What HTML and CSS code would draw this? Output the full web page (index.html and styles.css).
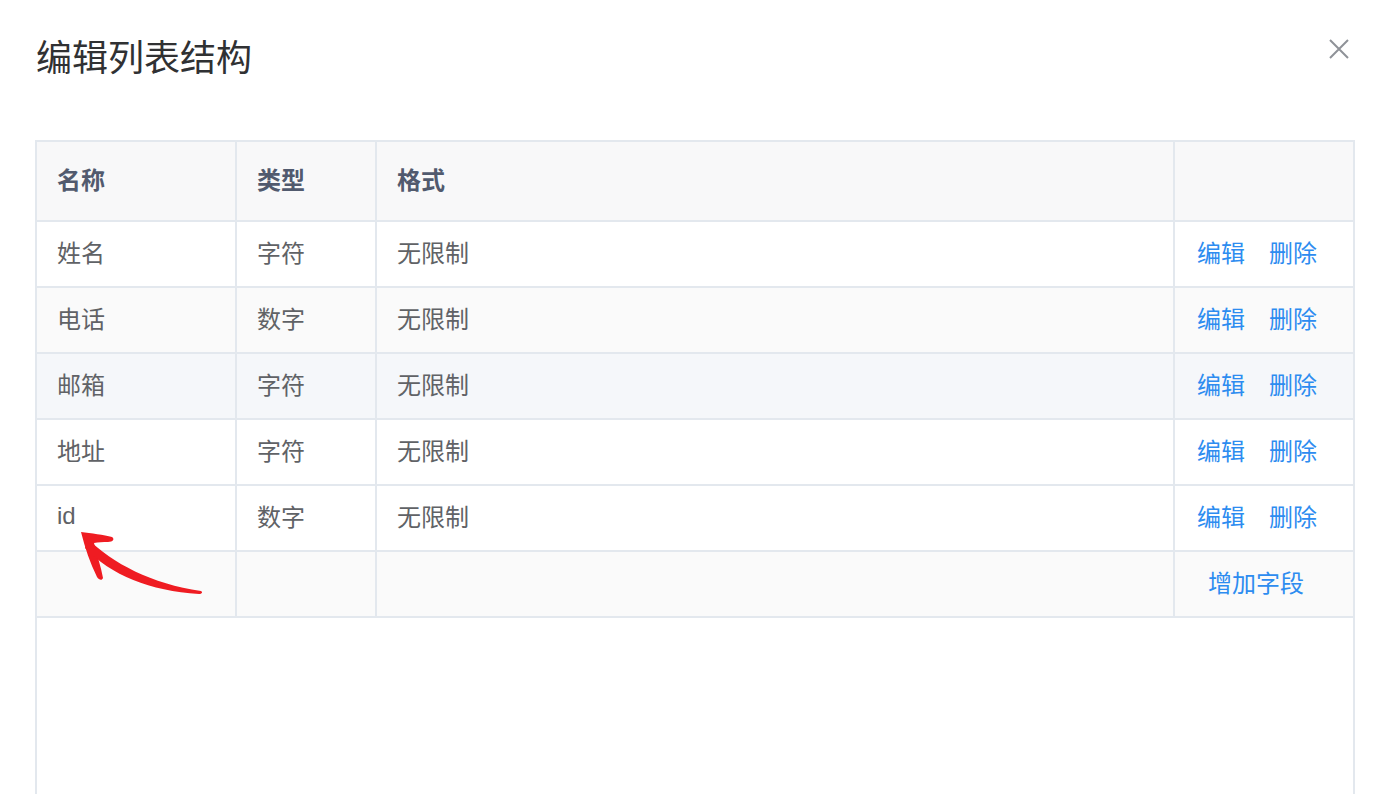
FILE: index.html
```html
<!DOCTYPE html>
<html lang="zh-CN">
<head>
<meta charset="utf-8">
<title>编辑列表结构</title>
<link rel="stylesheet" href="styles.css">
</head>
<body>
<div class="dialog">
  <div class="dialog-head">
    <h1 class="dialog-title">编辑列表结构</h1>
    <button class="close" aria-label="关闭">
      <svg viewBox="0 0 20 20" width="20" height="20"><path d="M1 1 L19 19 M19 1 L1 19" stroke="#8f9298" stroke-width="2" fill="none"/></svg>
    </button>
  </div>

  <div class="table">
    <div class="rows">
      <div class="row head">
        <div class="cell">名称</div>
        <div class="cell">类型</div>
        <div class="cell">格式</div>
        <div class="cell"></div>
      </div>
      <div class="row">
        <div class="cell">姓名</div>
        <div class="cell">字符</div>
        <div class="cell">无限制</div>
        <div class="cell actions"><a>编辑</a><a>删除</a></div>
      </div>
      <div class="row stripe">
        <div class="cell">电话</div>
        <div class="cell">数字</div>
        <div class="cell">无限制</div>
        <div class="cell actions"><a>编辑</a><a>删除</a></div>
      </div>
      <div class="row hover">
        <div class="cell">邮箱</div>
        <div class="cell">字符</div>
        <div class="cell">无限制</div>
        <div class="cell actions"><a>编辑</a><a>删除</a></div>
      </div>
      <div class="row">
        <div class="cell">地址</div>
        <div class="cell">字符</div>
        <div class="cell">无限制</div>
        <div class="cell actions"><a>编辑</a><a>删除</a></div>
      </div>
      <div class="row">
        <div class="cell">id</div>
        <div class="cell">数字</div>
        <div class="cell">无限制</div>
        <div class="cell actions"><a>编辑</a><a>删除</a></div>
      </div>
      <div class="row stripe">
        <div class="cell"></div>
        <div class="cell"></div>
        <div class="cell"></div>
        <div class="cell add"><a>增加字段</a></div>
      </div>
    </div>
  </div>

  <!-- hand-drawn pointer to the id row -->
  <svg class="pointer" viewBox="0 0 1390 794" width="1390" height="794">
    <path fill="#ef1c22" d="M81,532 C91,533 104,535 112,537 C115,539 113,542 108,542 C103,542 98,542 94,543 C97,555 101,567 103,578 C102,581 99,580 97,577 C90,563 85,548 81,532 Z"/>
    <path fill="#ef1c22" d="M88,539 C112,563 152,584 201,591 C203,592 202,594 199,594 C150,591 111,575 85,548 Z"/>
  </svg>
</div>
</body>
</html>
```

FILE: styles.css
```css
* { box-sizing: border-box; }

html, body {
  margin: 0;
  padding: 0;
  background: #ffffff;
  height: 100%;
  overflow: hidden;
}

body {
  font-family: "Liberation Sans", "Noto Sans CJK SC", sans-serif;
  color: #606266;
}

.dialog {
  position: relative;
  display: flex;
  flex-direction: column;
  padding: 37px 35px 0 35px;
  height: 100%;
}

.dialog-head {
  display: flex;
  justify-content: space-between;
  align-items: flex-start;
}

.dialog-title {
  margin: 0;
  font-family: "Noto Sans CJK SC", sans-serif;
  font-weight: 400;
  font-size: 36px;
  line-height: 36px;
  color: #303133;
  padding-left: 1px;
}

.close {
  margin: 2px 6px 0 0;
  padding: 0;
  width: 20px;
  height: 20px;
  border: 0;
  background: none;
  display: block;
}
.close svg { display: block; }

.table {
  margin-top: 67px;
  flex: 1;
  border: 2px solid #e3e8ee;
  border-bottom: 0;
}

.rows {
  display: flex;
  flex-direction: column;
  gap: 2px;
  background: #e3e8ee;
  border-bottom: 2px solid #e3e8ee;
}

.row {
  display: grid;
  grid-template-columns: 198px 138px 796px 1fr;
  gap: 2px;
  height: 64px;
}

.cell {
  background: #ffffff;
  display: flex;
  align-items: center;
  padding-left: 20px;
  padding-bottom: 5px;
  font-size: 24px;
  white-space: nowrap;
}

.row.head { height: 78px; }
.row.head .cell {
  background: #f8f8f9;
  font-weight: 700;
  color: #515a6e;
}

.row.stripe .cell { background: #fafafa; }
.row.hover .cell { background: #f5f7fa; }

.cell a {
  color: #2d8cf0;
  text-decoration: none;
}

.cell.actions { padding-left: 22px; gap: 24px; }
.cell.add { padding-left: 33px; }

.pointer {
  position: absolute;
  left: 0;
  top: 0;
  pointer-events: none;
}
```
